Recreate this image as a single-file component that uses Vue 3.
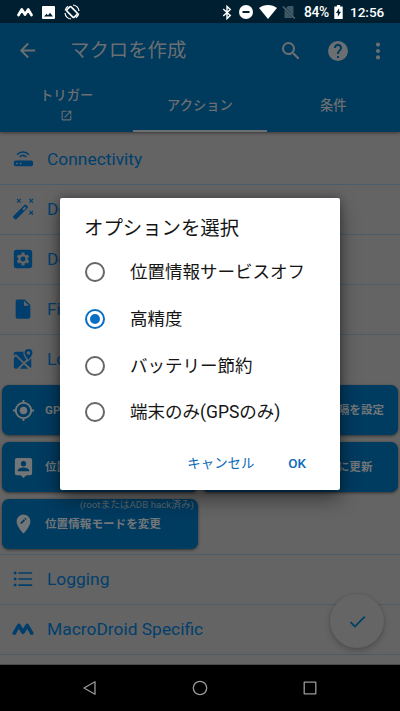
<script setup>
import { ref } from 'vue'

const tabs = [
  { label: 'トリガー', external: true },
  { label: 'アクション', active: true },
  { label: '条件' },
]
const categories = [
  { label: 'Connectivity', icon: 'router' },
  { label: 'Device Actions', icon: 'wand' },
  { label: 'Device Settings', icon: 'settings' },
  { label: 'Files', icon: 'file' },
  { label: 'Location', icon: 'map', open: true },
]
const actions = [
  { label: 'GPS有効/無効', icon: 'gps' },
  { label: '位置情報の更新間隔を設定', icon: 'gps' },
  { label: '位置を共有', icon: 'person' },
  { label: '位置情報を強制的に更新', icon: 'gps' },
  { label: '位置情報モードを変更', icon: 'pin', note: '(rootまたはADB hack済み)' },
]
const later = [
  { label: 'Logging', icon: 'list' },
  { label: 'MacroDroid Specific', icon: 'macro' },
]
const options = ['位置情報サービスオフ', '高精度', 'バッテリー節約', '端末のみ(GPSのみ)']
const selected = ref(1)

const icons = {
  settings: 'M5 2h14a3 3 0 0 1 3 3v14a3 3 0 0 1-3 3H5a3 3 0 0 1-3-3V5a3 3 0 0 1 3-3zm5.500 3-.4 2.100-1.300.8-2-.7-1.500 2.600 1.600 1.400v1.600l-1.600 1.400 1.500 2.600 2-.7 1.300.8.4 2.100h3l.4-2.100 1.300-.8 2 .7 1.500-2.600-1.600-1.400v-1.600l1.600-1.400-1.500-2.600-2 .7-1.300-.8L13.500 5zM12 9.300a2.700 2.700 0 1 1 0 5.400 2.700 2.700 0 0 1 0-5.400z',
  file: 'M6 1.500h8l6 6V20.500a2 2 0 0 1-2 2H6a2 2 0 0 1-2-2v-17a2 2 0 0 1 2-2zM13 3v5.500h5.500z',
  gps: 'M12 8c-2.210 0-4 1.790-4 4s1.790 4 4 4 4-1.790 4-4-1.790-4-4-4zm8.940 3A8.994 8.994 0 0 0 13 3.060V1h-2v2.060A8.994 8.994 0 0 0 3.060 11H1v2h2.060A8.994 8.994 0 0 0 11 20.940V23h2v-2.060A8.994 8.994 0 0 0 20.940 13H23v-2h-2.060zM12 19c-3.870 0-7-3.130-7-7s3.130-7 7-7 7 3.130 7 7-3.130 7-7 7z',
  person: 'M19 2H5a2 2 0 0 0-2 2v14a2 2 0 0 0 2 2h4l3 3 3-3h4a2 2 0 0 0 2-2V4a2 2 0 0 0-2-2zm-7 3.300a2.700 2.700 0 1 1 0 5.400 2.700 2.700 0 0 1 0-5.400zM18 16H6v-.9c0-2 4-3.100 6-3.100s6 1.100 6 3.100z',
  pin: 'M12 1.500A7.200 7.200 0 0 0 4.800 8.800c0 5.300 7.200 12.700 7.200 12.700S19.200 14.100 19.200 8.800A7.200 7.200 0 0 0 12 1.500zM10.300 11.300H8.900V9.900l3.400-3.400 1.400 1.400zm4-4-1.400-1.400.6-.6q.3-.3.600 0l.8.8q.3.3 0 .6z',
}
</script>

<template>
  <div class="screen">
    <div class="status">
      <div class="status-left">
        <svg class="s-macro" viewBox="0 0 16 10"><path d="M1.500 8 4.800 2.500 8 7.500 11.200 2.500 14.500 8" /></svg>
        <svg class="s-image" viewBox="0 0 13 13"><path fill-rule="evenodd" d="M1 0h11a1 1 0 0 1 1 1v11a1 1 0 0 1-1 1H1a1 1 0 0 1-1-1V1a1 1 0 0 1 1-1zm1 10.500h9L8 6.700l-2 2.600-1.400-1.600z" /></svg>
        <svg class="s-rotate" viewBox="0 0 16 16"><rect x="5" y="2.800" width="6" height="10.400" rx="1" transform="rotate(-45 8 8)" /><path class="arc" d="M9 1a7 7 0 0 1 6 6M1 9a7 7 0 0 0 6 6M1.200 6.500A7 7 0 0 1 4 2.300M14.800 9.500a7 7 0 0 1-2.800 4.200" /></svg>
      </div>
      <div class="status-right">
        <svg class="s-bt" viewBox="0 0 10 16"><path d="m1 4.300 7.500 7L5 14.500v-13l3.500 3.200L1 11.700" /></svg>
        <svg class="s-dnd" viewBox="0 0 14 14"><circle cx="7" cy="7" r="7" /><path d="M3.500 6h7v2h-7z" /></svg>
        <svg class="s-wifi" viewBox="0 0 18 14"><path d="M9 14 0 3C5-1 13-1 18 3z" /></svg>
        <svg class="s-sim" viewBox="0 0 14 14"><path class="fill" d="M6 1h5.500v10L4 3zM2.500 4.500 11 13H2.500z" /><path class="line" d="m.8 1.500 12 12" /></svg>
        <span class="pct">84%</span>
        <svg class="s-bat" viewBox="0 0 9 15"><path fill-rule="evenodd" d="M2.800 0h3.400v1.500H9V15H0V1.500h2.800zM5.200 3.500 1.800 8.700h2V12.500l3.400-5.300h-2z" /></svg>
        <span class="time">12:56</span>
      </div>
    </div>

    <header class="appbar">
      <div class="toolbar">
        <svg class="back" viewBox="0 0 24 24"><path d="M20 11H7.830l5.590-5.590L12 4l-8 8 8 8 1.410-1.410L7.830 13H20z" /></svg>
        <h1>マクロを作成</h1>
        <svg class="search" viewBox="0 0 24 24"><path d="M15.500 14h-.79l-.28-.27A6.470 6.470 0 0 0 16 9.500 6.500 6.500 0 1 0 9.500 16c1.610 0 3.090-.59 4.230-1.570l.27.28v.79l5 4.990L20.490 19zm-6 0a4.500 4.500 0 1 1 0-9 4.500 4.500 0 0 1 0 9z" /></svg>
        <svg class="help" viewBox="0 0 24 24"><path d="M12 2a10 10 0 1 0 0 20 10 10 0 0 0 0-20zm1 17h-2v-2h2zm2.070-7.750-.9.920C13.450 12.900 13 13.500 13 15h-2v-.5c0-1.100.45-2.100 1.170-2.830l1.240-1.260A2 2 0 1 0 10 9H8a4 4 0 1 1 7.070 2.250z" /></svg>
        <svg class="more" viewBox="0 0 6 18"><circle cx="3" cy="2.600" r="2.100" /><circle cx="3" cy="9" r="2.100" /><circle cx="3" cy="15.400" r="2.100" /></svg>
      </div>
      <nav class="tabs">
        <div v-for="t in tabs" :key="t.label" class="tab" :class="{ active: t.active }">
          <span>{{ t.label }}</span>
          <svg v-if="t.external" viewBox="0 0 24 24"><path d="M19 19H5V5h7V3H5a2 2 0 0 0-2 2v14a2 2 0 0 0 2 2h14a2 2 0 0 0 2-2v-7h-2zM14 3v2h3.590l-9.830 9.830 1.410 1.410L19 6.410V10h2V3z" /></svg>
        </div>
      </nav>
    </header>

    <main class="content">
      <div v-for="c in categories" :key="c.label" class="row" :class="{ open: c.open }">
        <svg v-if="c.icon === 'router'" class="ico" viewBox="0 0 24 24">
          <path class="stroke" d="M5.600 7.200C9.200 3.400 14.800 3.400 18.400 7.200M8.400 9.800c2.100-2 5.100-2 7.200 0" />
          <path fill-rule="evenodd" d="M4 13.500h17a2 2 0 0 1 2 2v2.500a2 2 0 0 1-2 2H4a2 2 0 0 1-2-2v-2.500a2 2 0 0 1 2-2zM4.500 16v1.800h1.800V16zm4 0v1.800h1.800V16z" />
        </svg>
        <svg v-else-if="c.icon === 'wand'" class="ico wand" viewBox="0 0 24 24">
          <path fill-rule="evenodd" d="M1.500 19.500 13.500 7.500q1-.8 2 0l1.500 1.500q.8 1 0 2L5 23q-1 .8-2 0l-1.500-1.500q-.8-1 0-2zM11.300 12l1.500 1.500 2.700-2.700L14 9.300z" />
          <path class="spark" d="m5.500 1 4 4m0-4-4 4M19 1l4 4m0-4-4 4m0 9 4 4m0-4-4 4" />
        </svg>
        <svg v-else-if="c.icon === 'map'" class="ico" viewBox="0 0 24 24">
          <path d="M4 4h8.500c-.5 3 1.200 5.700 3.300 8.500L13 15.300 4.200 6.500 2 8.700V6a2 2 0 0 1 2-2zM2 11.200l2.200-2.200 7.500 7.500L5.500 22.500H4a2 2 0 0 1-2-2zM8.500 22.500l4.500-4.500 4.500 4.500zM14.500 16.700l2.300-2.300.6.700 3.600-4v9.400q0 .7-.4 1.300z" />
          <path fill-rule="evenodd" d="M18 1a4.300 4.300 0 0 0-4.300 4.300C13.700 8.500 18 13 18 13s4.300-4.500 4.300-7.700A4.300 4.300 0 0 0 18 1zm0 2.600a1.800 1.800 0 1 1 0 3.600 1.800 1.800 0 0 1 0-3.600z" />
        </svg>
        <svg v-else class="ico" viewBox="0 0 24 24"><path fill-rule="evenodd" :d="icons[c.icon]" /></svg>
        <span>{{ c.label }}</span>
      </div>

      <div class="grid">
        <div v-for="a in actions" :key="a.label" class="card">
          <svg viewBox="0 0 24 24"><path fill-rule="evenodd" :d="icons[a.icon]" /></svg>
          <span class="card-label">{{ a.label }}</span>
          <span v-if="a.note" class="note">{{ a.note }}</span>
        </div>
      </div>

      <div v-for="c in later" :key="c.label" class="row">
        <svg v-if="c.icon === 'list'" class="ico" viewBox="0 0 24 24"><path d="M7 4.500h15v1.800H7zM7 11.100h15v1.800H7zM7 17.700h15v1.800H7zM2 4h2.800v2.800H2zM2 10.600h2.800v2.800H2zM2 17.200h2.800V20H2z" /></svg>
        <svg v-else class="ico macro" viewBox="0 0 24 24"><path d="M2.500 16.500 7.500 8 12 15.500 16.500 8 21.500 16.500" /></svg>
        <span>{{ c.label }}</span>
      </div>
      <button class="fab"><svg viewBox="0 0 24 24"><path d="M9 16.170 4.830 12l-1.420 1.410L9 19 21 7l-1.410-1.410z" /></svg></button>
    </main>

    <footer class="nav">
      <svg viewBox="0 0 16 16"><path d="M13 1.700v12.600L2 8z" /></svg>
      <svg viewBox="0 0 16 16"><circle cx="8" cy="8" r="6.700" /></svg>
      <svg viewBox="0 0 16 16"><path d="M2.200 2.200h11.600v11.600H2.200z" /></svg>
    </footer>

    <section class="dialog">
      <h2>オプションを選択</h2>
      <div v-for="(o, i) in options" :key="o" class="option" @click="selected = i">
        <span class="radio" :class="{ checked: i === selected }"></span>
        <span>{{ o }}</span>
      </div>
      <div class="buttons"><span>キャンセル</span><span class="ok">OK</span></div>
    </section>
  </div>
</template>

<style>
body { margin: 0; background: #000; }
</style>

<style scoped>
.screen {
  position: relative; width: 400px; height: 711px; overflow: hidden;
  display: flex; flex-direction: column; background: #646464;
  font-family: Roboto, "Noto Sans CJK JP", sans-serif;
}
.screen * { box-sizing: border-box; }
svg { display: block; flex: none; fill: currentColor; }
.status { height: 23px; flex: none; background: #001f30; color: #fff; display: flex; justify-content: space-between; align-items: center; padding: 1px 16px 0 17px; }
.status-left, .status-right { display: flex; align-items: center; }
.s-macro { width: 16px; height: 10px; fill: none; stroke: #fff; stroke-width: 2.700; stroke-linecap: round; stroke-linejoin: round; }
.s-image { width: 13px; height: 13px; margin-left: 9px; }
.s-rotate { width: 16px; height: 16px; margin-left: 9px; fill: none; stroke: #fff; stroke-width: 1.600; }
.s-rotate .arc { stroke-width: 1.200; }
.s-bt { width: 10px; height: 15px; fill: none; stroke: #fff; stroke-width: 1.500; }
.s-dnd { width: 14px; height: 14px; margin-left: 7px; }
.s-dnd path { fill: #001f30; }
.s-wifi { width: 18px; height: 14px; margin-left: 6px; }
.s-sim { width: 14px; height: 14px; margin-left: 5px; }
.s-sim .fill { fill: #3f5663; }
.s-sim .line { stroke: #536a76; stroke-width: 1.300; }
.pct { font-size: 13.800px; font-weight: 500; line-height: 20px; margin-left: 8px; width: 25px; letter-spacing: -.4px; white-space: nowrap; }
.s-bat { width: 9px; height: 14px; margin-left: 5px; }
.time { font-size: 13.500px; font-weight: 500; line-height: 20px; margin-left: 7px; width: 34px; white-space: nowrap; }

.appbar { height: 109px; flex: none; background: #003a5c; color: #6b6f72; box-shadow: 0 1px 3px rgba(0,0,0,.45); position: relative; display: flex; flex-direction: column; }
.toolbar { height: 55px; display: flex; align-items: center; padding: 0 17px 0 16px; }
.back { width: 23px; height: 23px; }
h1 { margin: 1px auto 0 31px; font-size: 19.400px; font-weight: 400; line-height: 30px; }
.search { width: 24px; height: 24px; }
.help { width: 24px; height: 24px; margin-left: 23px; }
.more { width: 6px; height: 18px; margin-left: 25px; margin-right: 2px; }
.tabs { flex: 1; display: grid; grid-template-columns: repeat(3, 1fr); }
.tab { display: flex; flex-direction: column; align-items: center; justify-content: center; font-size: 13.300px; line-height: 20px; font-weight: 500; padding-top: 2px; }
.tab svg { width: 13px; height: 13px; margin-top: 3px; margin-bottom: 4px; }
.tab.active { border-bottom: 2px solid #6b6f72; padding-top: 3px; }

.content { flex: 1; position: relative; display: flex; flex-direction: column; padding-top: 3px; border-bottom: 1px solid #4a4a4a; color: #003f6d; min-height: 0; }
.row { height: 50px; flex: none; border-bottom: 1px solid #4c5c68; display: flex; align-items: center; padding: 0 0 2px 12px; font-size: 17.400px; line-height: 24px; white-space: nowrap; }
.row span { margin-left: 13px; }
.row.open { border-bottom: 0; }
.ico { width: 22px; height: 22px; }
.ico .stroke { fill: none; stroke: currentColor; stroke-width: 1.700; }
.ico .spark { fill: none; stroke: currentColor; stroke-width: 1.200; }
.macro { fill: none; stroke: currentColor; stroke-width: 4; stroke-linecap: round; stroke-linejoin: round; }
.grid { display: grid; grid-template-columns: 196px 196px; column-gap: 4px; row-gap: 7px; padding: 0 2px 5px; border-bottom: 1px solid #4c5c68; flex: none; }
.card { position: relative; height: 50px; border-radius: 7px; background: #003b60; box-shadow: 0 1px 3px rgba(0,0,0,.5); color: #727679; display: flex; align-items: center; padding-left: 10px; font-size: 11.600px; font-weight: 700; line-height: 18px; white-space: nowrap; }
.card svg { width: 23px; height: 23px; }
.card-label { margin-left: 10px; }
.note { position: absolute; right: 4px; top: -3px; font-size: 9.700px; font-weight: 400; color: #5c6870; }
.fab { position: absolute; left: 330px; top: 462px; width: 54px; height: 54px; padding: 0; border: 0; border-radius: 50%; background: #656565; color: #003f62; box-shadow: 0 3px 6px rgba(0,0,0,.2), 0 0 3px rgba(0,0,0,.1); display: flex; align-items: center; justify-content: center; }
.fab svg { width: 21px; height: 21px; }

.nav { height: 46px; flex: none; background: #000; display: flex; justify-content: center; align-items: center; gap: 94px; }
.nav svg { width: 16px; height: 16px; fill: none; stroke: #999; stroke-width: 1.300; stroke-linejoin: round; }

.dialog { position: absolute; left: 60px; top: 198px; width: 280px; height: 292px; border-radius: 2px; background: #fff; color: #151515; padding: 16px 24px 0; box-shadow: 0 9px 20px rgba(0,0,0,.42), 0 0 8px rgba(0,0,0,.3); }
h2 { margin: 0 0 5px; font-size: 19.400px; font-weight: 400; line-height: 30px; }
.option { height: 46.700px; display: flex; align-items: center; font-size: 17.500px; line-height: 26px; white-space: nowrap; }
.radio { width: 20px; height: 20px; border: 2px solid #666; border-radius: 50%; margin: 0 25px 0 1px; display: flex; align-items: center; justify-content: center; }
.radio.checked { border-color: #0a6fc2; }
.radio.checked::after { content: ""; width: 10px; height: 10px; border-radius: 50%; background: #0a6fc2; }
.buttons { display: flex; justify-content: flex-end; gap: 34px; padding: 18px 10px 0 0; color: #0869b8; font-size: 13.400px; line-height: 20px; }
.ok { font-weight: 500; }
</style>
